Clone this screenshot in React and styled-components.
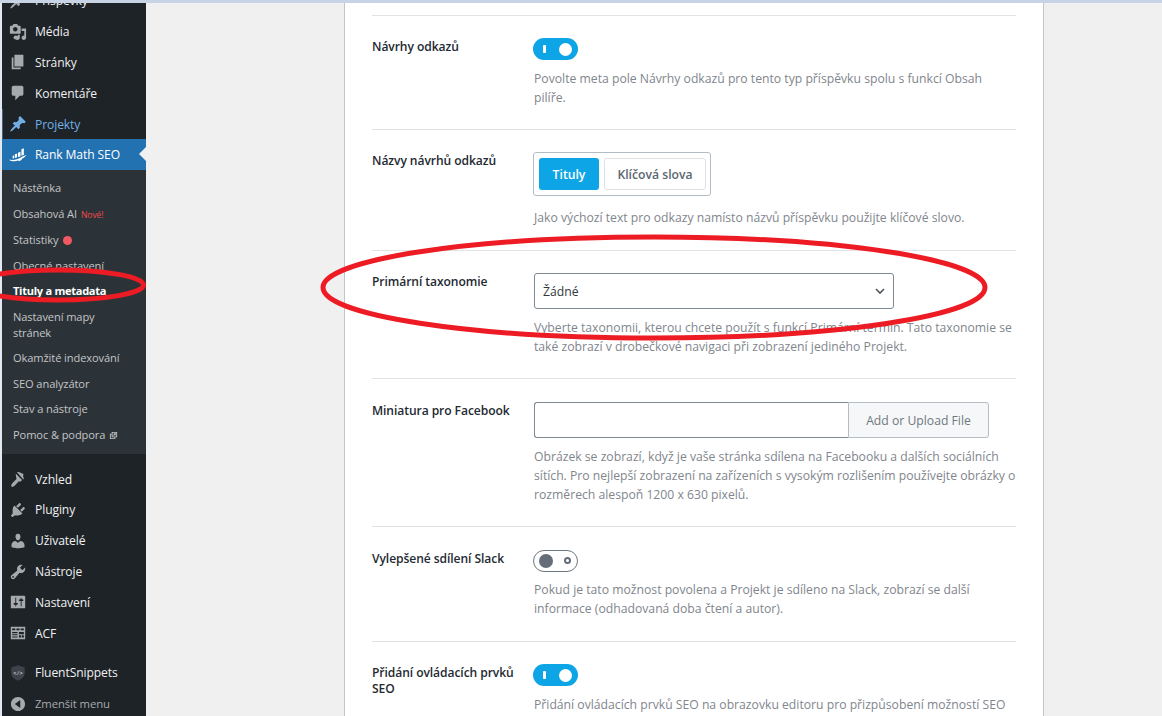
import React from "react";
import styled, { createGlobalStyle } from "styled-components";

const Global = createGlobalStyle`
  html, body { margin: 0; padding: 0; height: 100%; overflow: hidden; background: #f0f0f1; }
  * { box-sizing: border-box; }
  #root { height: 716px; }
`;

const Page = styled.div`
  position: relative; width: 1162px; height: 716px; overflow: hidden;
  display: flex; flex-direction: column;
  font-family: "Open Sans", "Noto Sans", sans-serif;
`;
const TopStrip = styled.div`height: 3px; flex: none; background: #c9d3e6;`;
const Body = styled.div`flex: 1; min-height: 0; display: flex; overflow: hidden;`;
const LeftStrip = styled.div`width: 2px; flex: none; background: #e3e9f2;`;
const Sidebar = styled.nav`width: 144px; flex: none; background: #1d2327; overflow: hidden;`;
const MenuList = styled.div`margin-top: -17.5px; display: flex; flex-direction: column;`;
const MenuItem = styled.div`
  height: 30.8px; flex: none; display: flex; align-items: center; gap: 8px; padding-left: 7px;
  font-size: ${p => p.$small ? "11.3px" : "12.1px"}; letter-spacing: -0.1px; position: relative;
  color: ${p => p.$color || "#f0f0f1"};
  background: ${p => p.$bg || "transparent"};
  box-shadow: ${p => p.$edge ? "inset 1px 0 0 #46627f" : "none"};
  svg.ic { width: 18px; height: 18px; flex: none; fill: ${p => p.$icon || "#a7aaad"}; }
`;
const Arrow = styled.span`
  position: absolute; right: 0; top: 8px; width: 0; height: 0;
  border: 7px solid transparent; border-right-color: #f0f0f1; border-left: 0;
`;
const SubMenu = styled.div`
  background: #2c3338; padding: 5px 0 6px; display: flex; flex-direction: column;
`;
const SubItem = styled.div`
  min-height: 25.7px; padding: 5px 14px 4px 11px; font-size: 11.1px; line-height: 16px; letter-spacing: -0.1px;
  color: ${p => p.$active ? "#fff" : "#c3c4c7"};
  font-weight: ${p => p.$active ? 700 : 400};
  ${p => p.$active && "letter-spacing: -0.3px;"}
`;
const NewBadge = styled.span`color: #f0484c; font-size: 8.6px; margin-left: 4px;`;
const Dot = styled.span`
  display: inline-block; width: 9px; height: 9px; border-radius: 50%; background: #f0595f;
  margin-left: 5px; vertical-align: -1px;
`;
const ExtIcon = styled.svg`width: 9px; height: 9px; margin-left: 4px; vertical-align: -1px; fill: #c3c4c7;`;
const Gap = styled.div`height: ${p => p.$h}px; flex: none;`;

const Content = styled.main`flex: 1; min-width: 0; padding-left: 198px; overflow: hidden;`;
const Card = styled.section`
  width: 700px; background: #fff; border-left: 1px solid #c3c4c7; border-right: 1px solid #c3c4c7;
  padding: 12px 27px 0; height: 720px;
`;
const Row = styled.div`
  display: grid; grid-template-columns: 162px 482px; border-top: 1px solid #e1e3e5;
  padding: ${p => p.$top || 22}px 0 ${p => p.$bottom || 22}px;
`;
const Label = styled.div`
  font-size: 12.1px; font-weight: 600; color: #242a32; line-height: 16px; padding: 1px 8px 0 0;
  letter-spacing: -0.08px;
`;
const Control = styled.div`min-width: 0;`;
const Desc = styled.p`
  margin: ${p => p.$mt ?? 9}px 0 0; font-size: 12.2px; line-height: 19px; color: #7f868d; letter-spacing: 0;
`;
const Toggle = styled.div`
  position: relative; width: 45px; height: 22px; border-radius: 11px;
  background: ${p => p.$on ? "#0ea5e6" : "#fff"};
  border: ${p => p.$on ? "none" : "1px solid #6c7781"};
  margin-left: -1px;
`;
const Bar = styled.span`position: absolute; left: 10px; top: 7px; width: 3px; height: 8px; background: #fff; border-radius: 1px;`;
const Thumb = styled.span`
  position: absolute; border-radius: 50%;
  ${p => p.$on ? "left: 26px; top: 5px; width: 13px; height: 13px; background: #fff;" : "left: 5px; top: 3px; width: 14px; height: 14px; background: #646d78;"}
`;
const Ring = styled.span`position: absolute; left: 30px; top: 6px; width: 7px; height: 7px; border: 2px solid #646d78; border-radius: 50%;`;
const TabGroup = styled.div`
  display: flex; width: fit-content; gap: 5px; padding: 5px 4px 5px 5px; border: 1px solid #b4bcc6; border-radius: 3px; margin-left: -1px;
`;
const Tab = styled.div`
  height: 32px; display: flex; align-items: center; justify-content: center; border-radius: 3px;
  font-size: 12.2px; font-weight: 600; width: ${p => p.$w}px;
  background: ${p => p.$on ? "#0ea5e6" : "#fff"};
  color: ${p => p.$on ? "#fff" : "#5c6670"};
  border: ${p => p.$on ? "none" : "1px solid #dfe2e5"};
`;
const Select = styled.div`
  width: 360px; height: 36px; border: 1px solid #7e8993; border-radius: 3px; display: flex;
  align-items: center; justify-content: space-between; padding: 0 6px 0 8px;
  font-size: 12.2px; color: #32373c; background: #fff;
`;
const UploadRow = styled.div`display: flex; width: 455px; height: 36px;`;
const TextField = styled.div`flex: 1; border: 1px solid #7e8993; border-right: none; border-radius: 3px 0 0 3px; background: #fff;`;
const UploadBtn = styled.div`
  width: 141px; border: 1px solid #b4bcc6; border-radius: 0 3px 3px 0; background: #f6f7f8;
  display: flex; align-items: center; justify-content: center; font-size: 12.2px; color: #6f7882;
`;
const Annotation = styled.svg`position: absolute; left: 0; top: 0; width: 1162px; height: 716px; pointer-events: none;`;

const P = ({ d }) => <svg className="ic" viewBox="0 0 20 20"><path fillRule="evenodd" d={d} /></svg>;

const icons = {
  post: "M10.44 3.02l1.82-1.82 6.36 6.35-1.83 1.82c-1.05-.68-2.48-.57-3.41.36l-.75.75c-.92.93-1.04 2.35-.35 3.41l-1.83 1.82-2.41-2.41-2.8 2.79c-.42.42-3.38 2.71-3.8 2.29s1.86-3.39 2.28-3.81l2.79-2.79L4.1 9.36l1.83-1.82c1.05.69 2.48.57 3.4-.36l.75-.75c.93-.92 1.05-2.35.36-3.41z",
  media: "M13 11V4c0-.55-.45-1-1-1h-1.67L9 1H5L3.67 3H2c-.55 0-1 .45-1 1v7c0 .55.45 1 1 1h10c.55 0 1-.45 1-1zM7 4.5c1.38 0 2.5 1.12 2.5 2.5S8.38 9.5 7 9.5 4.5 8.38 4.5 7 5.62 4.5 7 4.5zM14 6h5v10.5c0 1.38-1.12 2.5-2.5 2.5S14 17.88 14 16.5s1.12-2.5 2.5-2.5c.17 0 .34.02.5.05V9h-3V6zm-4 8.05V13h2v3.5c0 1.38-1.12 2.5-2.5 2.5S5 17.88 5 16.5 6.12 14 7.5 14c.17 0 .34.02.5.05z",
  page: "M6 15V2h10v13H6zm-1 1h8v2H3V5h2v11z",
  comment: "M5 2h9c1.1 0 2 .9 2 2v7c0 1.1-.9 2-2 2h-2l-5 5v-5H5c-1.1 0-2-.9-2-2V4c0-1.1.9-2 2-2z",
  brush: "M8.9 2.5c.5-.56 2.3-.47 3.6.32 1.3.8 1.6 1.3 2.1 1.3.3 0 .8-.15 1.1-.5 0 1 .3 1.3.3 2 0 .6-.3 1-.3 1.4 0 .7.7 1.3.7 2.1 0 .5-.2 1-.5 1.4zM7.4 4l7.1 7.1-1.9 1.9-1.7-.4-4.4 4.5c-.8.8-3.3 1.9-3.9 1.3-.6-.6.5-3.1 1.3-3.9l4.5-4.4-.4-1.7z",
  plugin: "M13.11 4.36L9.87 7.6 8 5.73l3.24-3.24c.35-.34 1.05-.2 1.56.32.52.51.66 1.21.31 1.55zm-8 1.77l.91-1.12 9.01 9.01-1.19.84c-.71.71-2.63 1.16-3.82 1.16H6.14L4.9 17.26c-.59.59-1.54.59-2.12 0-.59-.58-.59-1.53 0-2.12l1.24-1.24v-3.88c0-1.13.4-3.05 1.09-3.89zm7.26 3.97l3.24-3.24c.34-.35 1.04-.21 1.55.31.52.51.66 1.21.31 1.55l-3.24 3.25z",
  users: "M10 9.25c-2.27 0-2.73-3.44-2.73-3.44C7 4.02 7.82 2 9.97 2c2.16 0 2.98 2.02 2.71 3.81 0 0-.41 3.44-2.68 3.44zm0 2.57L12.72 10c2.39 0 4.52 2.33 4.52 4.53v2.49s-3.65 1.13-7.24 1.13c-3.65 0-7.24-1.13-7.24-1.13v-2.49c0-2.25 1.94-4.48 4.47-4.48z",
  tools: "M16.68 9.77c-1.34 1.34-3.3 1.67-4.95.99l-5.41 6.52c-.99.99-2.59.99-3.57 0-.99-.98-.99-2.58 0-3.57l6.52-5.42c-.68-1.65-.35-3.61.99-4.95 1.28-1.28 3.12-1.62 4.72-1.06l-2.89 2.89 2.82 2.82 2.86-2.87c.53 1.58.18 3.39-1.09 4.65zM3.81 16.21c.4.39 1.03.39 1.42 0 .4-.4.4-1.03 0-1.43-.39-.39-1.02-.39-1.42 0-.39.4-.39 1.03 0 1.43z",
  settings: "M18 16V4c0-.55-.45-1-1-1H3c-.55 0-1 .45-1 1v12c0 .55.45 1 1 1h14c.55 0 1-.45 1-1zM8 11h1c.55 0 1 .45 1 1s-.45 1-1 1H8v1.5c0 .28-.22.5-.5.5s-.5-.22-.5-.5V13H6c-.55 0-1-.45-1-1s.45-1 1-1h1V5.5c0-.28.22-.5.5-.5s.5.22.5.5V11zm5-2h-1c-.55 0-1-.45-1-1s.45-1 1-1h1V5.5c0-.28.22-.5.5-.5s.5.22.5.5V7h1c.55 0 1 .45 1 1s-.45 1-1 1h-1v5.5c0 .28-.22.5-.5.5s-.5-.22-.5-.5V9z",
  acf: "M2 3h16v14H2zM3.5 5v2H7V5zm4.75 0v2h3.5V5zM13 5v2h3.5V5zM3.5 9v1.2h6V9zm0 2.4v1.2h6v-1.2zm0 2.4V15h6v-1.2zM11 9v2.500h5.500V9zm0 3.500V15h2.300v-2.500zm3.200 0V15h2.300v-2.500z",
  shield: "M10 1.5l7.5 2.300v6.200c0 4-3.500 7-7.500 8.500-4-1.500-7.500-4.500-7.500-8.500V3.800z",
  collapse: "M10 2.16c4.33 0 7.84 3.51 7.84 7.84 0 4.33-3.51 7.84-7.84 7.84-4.33 0-7.84-3.51-7.84-7.84 0-4.33 3.51-7.84 7.84-7.84zM12.5 14.500v-9L6.500 10z",
  rank: "M6.5 9.200l2.500-1v4.300c-.8.400-1.700.700-2.500.900zM10 7.500l2.800-1.200v5c-.9.300-1.900.700-2.800 1zM13.800 3.500l2.700-1v7.400c-.9.200-1.800.500-2.700.900zM4 11.200l1.700-.800v3.200c-.600.100-1.100.200-1.700.200zM.5 15.300c6 .800 11-1.300 14.500-3.700l3.500-1.400.8-.1c-1.300 2-2.800 3.200-4.500 3.900-1.200 2.600-3.300 3.100-5 2.200-2.400 1.300-7.300 1.100-9.800-.9z",
};

const Top1 = [
  ["Příspěvky", "post"], ["Média", "media"], ["Stránky", "page"], ["Komentáře", "comment"],
];
const Top2 = [
  ["Vzhled", "brush"], ["Pluginy", "plugin"], ["Uživatelé", "users"], ["Nástroje", "tools"], ["Nastavení", "settings"], ["ACF", "acf"],
];

export default function App() {
  return (
    <Page>
      <Global />
      <TopStrip />
      <Body>
        <LeftStrip />
        <Sidebar>
          <MenuList>
            {Top1.map(([t, i]) => <MenuItem key={t}><P d={icons[i]} />{t}</MenuItem>)}
            <MenuItem $color="#72aee6" $icon="#72aee6" $edge><P d={icons.post} />Projekty</MenuItem>
            <MenuItem $bg="#2271b1" $icon="#fff" $color="#fff"><P d={icons.rank} />Rank Math SEO<Arrow /></MenuItem>
            <SubMenu>
              <SubItem>Nástěnka</SubItem>
              <SubItem>Obsahová AI<NewBadge>Nové!</NewBadge></SubItem>
              <SubItem>Statistiky<Dot /></SubItem>
              <SubItem>Obecné nastavení</SubItem>
              <SubItem $active>Tituly a metadata</SubItem>
              <SubItem>Nastavení mapy stránek</SubItem>
              <SubItem>Okamžité indexování</SubItem>
              <SubItem>SEO analyzátor</SubItem>
              <SubItem>Stav a nástroje</SubItem>
              <SubItem>Pomoc &amp; podpora<ExtIcon viewBox="0 0 20 20"><path fillRule="evenodd" d="M6 2h12v12h-4v4H2V6h4zM8 4v8h8V4zM4 8v8h8v-2H6V8zM10 5h5v5l-2-1.500-2.500 2.500-1.500-1.500L11.500 7z" /></ExtIcon></SubItem>
            </SubMenu>
            <Gap $h={10} />
            {Top2.map(([t, i]) => <MenuItem key={t}><P d={icons[i]} />{t}</MenuItem>)}
            <Gap $h={9} />
            <MenuItem>
              <svg className="ic" viewBox="0 0 20 20">
                <path d={icons.shield} fill="#3c434a" />
                <text x="10" y="12" fontSize="6" textAnchor="middle" fill="#c3c4c7" fontFamily="Liberation Mono, monospace" fontWeight="700">{"</>"}</text>
              </svg>
              FluentSnippets
            </MenuItem>
            <MenuItem $color="#a7aaad" $small><P d={icons.collapse} />Zmenšit menu</MenuItem>
          </MenuList>
        </Sidebar>
        <Content>
          <Card>
            <Row>
              <Label>Návrhy odkazů</Label>
              <Control>
                <Toggle $on><Bar /><Thumb $on /></Toggle>
                <Desc>Povolte meta pole Návrhy odkazů pro tento typ příspěvku spolu s funkcí Obsah pilíře.</Desc>
              </Control>
            </Row>
            <Row $bottom={23}>
              <Label>Názvy návrhů odkazů</Label>
              <Control>
                <TabGroup><Tab $on $w={60}>Tituly</Tab><Tab $w={102}>Klíčová slova</Tab></TabGroup>
                <Desc $mt={12}>Jako výchozí text pro odkazy namísto názvů příspěvku použijte klíčové slovo.</Desc>
              </Control>
            </Row>
            <Row>
              <Label>Primární taxonomie</Label>
              <Control>
                <Select>
                  Žádné
                  <svg width="14" height="14" viewBox="0 0 14 14" fill="none" stroke="#50575e" strokeWidth="1.6"><path d="M3 5l4 4 4-4" /></svg>
                </Select>
                <Desc>Vyberte taxonomii, kterou chcete použít s funkcí Primární termín. Tato taxonomie se také zobrazí v drobečkové navigaci při zobrazení jediného Projekt.</Desc>
              </Control>
            </Row>
            <Row $top={23}>
              <Label>Miniatura pro Facebook</Label>
              <Control>
                <UploadRow><TextField /><UploadBtn>Add or Upload File</UploadBtn></UploadRow>
                <Desc>Obrázek se zobrazí, když je vaše stránka sdílena na Facebooku a dalších sociálních sítích. Pro nejlepší zobrazení na zařízeních s vysokým rozlišením používejte obrázky o rozměrech alespoň 1200 x 630 pixelů.</Desc>
              </Control>
            </Row>
            <Row $top={23} $bottom={23}>
              <Label>Vylepšené sdílení Slack</Label>
              <Control>
                <Toggle><Thumb /><Ring /></Toggle>
                <Desc $mt={8}>Pokud je tato možnost povolena a Projekt je sdíleno na Slack, zobrazí se další informace (odhadovaná doba čtení a autor).</Desc>
              </Control>
            </Row>
            <Row>
              <Label>Přidání ovládacích prvků SEO</Label>
              <Control>
                <Toggle $on><Bar /><Thumb $on /></Toggle>
                <Desc>Přidání ovládacích prvků SEO na obrazovku editoru pro přizpůsobení možností SEO</Desc>
              </Control>
            </Row>
          </Card>
        </Content>
      </Body>
      <Annotation viewBox="0 0 1162 716" fill="none" stroke="#ed1c24" strokeWidth="5">
        <ellipse cx="654" cy="287.5" rx="331" ry="50.5" />
        <ellipse cx="58" cy="285" rx="85.5" ry="15" />
      </Annotation>
    </Page>
  );
}
